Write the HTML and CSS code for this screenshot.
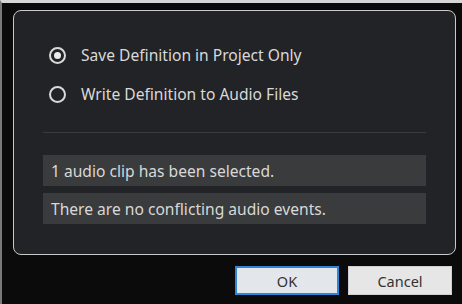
FILE: index.html
```html
<!doctype html>
<html lang="en">
  <head>
    <meta charset="UTF-8" />
    <title>Audio Definition</title>
    <link rel="stylesheet" href="styles.css">
  </head>
  <body>
    <div class="window">
      <div class="panel">
        <div class="options">
          <label class="option">
            <span class="radio checked"></span>
            <span class="option-label">Save Definition in Project Only</span>
          </label>
          <label class="option">
            <span class="radio"></span>
            <span class="option-label">Write Definition to Audio Files</span>
          </label>
        </div>
        <div class="separator"></div>
        <div class="messages">
          <div class="message">1 audio clip has been selected.</div>
          <div class="message">There are no conflicting audio events.</div>
        </div>
      </div>
      <div class="buttons">
        <button class="btn btn-default">OK</button>
        <button class="btn">Cancel</button>
      </div>
    </div>
  </body>
</html>
```

FILE: styles.css
```css
body {
  margin: 0;
  background-color: #0b0b0b;
  font-family: "Noto Sans", "Open Sans", sans-serif;
}
.window {
  width: 462px;
  height: 304px;
  box-sizing: border-box;
  border-top: 3px solid #d6d6d6;
  border-left: 2px solid #7a7a7a;
  padding: 7px 7px 0 11px;
}
.panel {
  width: 443px;
  box-sizing: border-box;
  border: 1px solid #c9c9c9;
  border-radius: 8px;
  background-color: #222326;
  padding: 32px 29px 30px 29px;
}
.options {
  display: flex;
  flex-direction: column;
  gap: 15px;
  padding-left: 6px;
}
.option {
  display: flex;
  align-items: center;
  gap: 15px;
  height: 24px;
  color: #d9d9d9;
  font-size: 15.6px;
}
.radio {
  width: 17px;
  height: 17px;
  box-sizing: border-box;
  border: 2px solid #dadada;
  border-radius: 50%;
  display: flex;
  justify-content: center;
  align-items: center;
}
.radio.checked:after {
  content: "";
  width: 7px;
  height: 7px;
  border-radius: 50%;
  background-color: #ececec;
}
.separator {
  height: 1px;
  background-color: #3a3b3f;
  margin-top: 26px;
}
.messages {
  display: flex;
  flex-direction: column;
  gap: 7px;
  margin-top: 22px;
}
.message {
  height: 31px;
  display: flex;
  align-items: center;
  padding-left: 8px;
  background-color: #3a3b3d;
  color: #d8d8d8;
  font-size: 15.6px;
}
.buttons {
  display: flex;
  justify-content: flex-end;
  gap: 9px;
  margin-top: 11px;
  padding-right: 3px;
}
.btn {
  width: 104px;
  height: 29px;
  box-sizing: border-box;
  border: 1px solid #d0d0d0;
  background-color: #e6e6e6;
  color: #333;
  font-family: "Noto Sans", "Open Sans", sans-serif;
  font-size: 14.5px;
  padding: 0;
}
.btn-default {
  border: 2px solid #2f86d6;
  background-color: #e3e6ea;
}
```
